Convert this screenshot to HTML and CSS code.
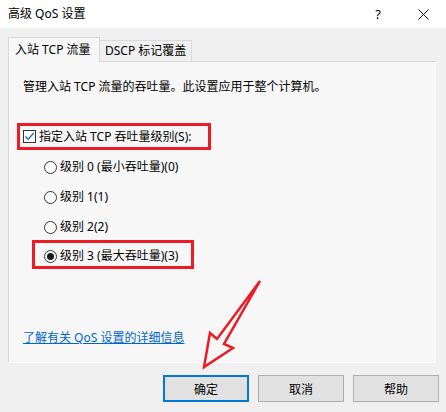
FILE: index.html
```html
<!DOCTYPE html>
<html lang="zh-CN">
<head>
  <meta charset="UTF-8">
  <title>高级 QoS 设置</title>
  <link rel="stylesheet" href="styles.css">
</head>
<body>
  <div class="titleBar">
    <div class="titleText">高级 QoS 设置</div>
    <div class="captionButton">?</div>
    <div class="captionButton">
      <svg width="11" height="11" viewBox="0 0 11 11"><path d="M0.5 0.5 L10.5 10.5 M10.5 0.5 L0.5 10.5" stroke="#111" stroke-width="1" fill="none"/></svg>
    </div>
  </div>

  <div class="dialog">
    <div class="tabs">
      <div class="tab active">入站 TCP 流量</div>
      <div class="tab">DSCP 标记覆盖</div>
    </div>

    <div class="panel">
      <p class="description">管理入站 TCP 流量的吞吐量。此设置应用于整个计算机。</p>

      <div class="highlight checkRow">
        <span class="checkBox">
          <svg width="11" height="11" viewBox="0 0 11 11"><path d="M1.5 5.5 L4.2 8.3 L9.6 2" stroke="#0a64c8" stroke-width="1.3" fill="none"/></svg>
        </span>
        <span>指定入站 TCP 吞吐量级别(S):</span>
      </div>

      <div class="radioGroup">
        <div class="radioRow"><span class="radio"></span>级别 0 (最小吞吐量)(0)</div>
        <div class="radioRow"><span class="radio"></span>级别 1(1)</div>
        <div class="radioRow"><span class="radio"></span>级别 2(2)</div>
        <div class="highlight radioRow selectedRow"><span class="radio checked"></span>级别 3 (最大吞吐量)(3)</div>
      </div>

      <a class="helpLink" href="#">了解有关 QoS 设置的详细信息</a>
    </div>

    <div class="buttonRow">
      <button class="dialogButton default">确定</button>
      <button class="dialogButton">取消</button>
      <button class="dialogButton">帮助</button>
    </div>
  </div>

  <!-- annotation arrow drawn over the screenshot -->
  <svg class="arrow" width="446" height="412" viewBox="0 0 446 412">
    <path d="M260 281 L217 339 L210 333 L204 367 L233 348 L224 344 Z" fill="none" stroke="#ec1c24" stroke-width="2.5" stroke-linejoin="miter"/>
  </svg>
</body>
</html>
```

FILE: styles.css
```css
* {
  margin: 0;
  padding: 0;
  box-sizing: border-box;
}

body {
  position: relative;
  width: 446px;
  height: 412px;
  overflow: hidden;
  background-color: #f0f0f0;
  font-family: "Noto Sans", "Noto Sans CJK SC", sans-serif;
  font-size: 12px;
  line-height: 16px;
  color: #000;
}

.titleBar {
  display: flex;
  align-items: center;
  height: 28px;
  background-color: #fff;
}

.titleText {
  flex: 1;
  padding-left: 8px;
}

.captionButton {
  width: 44px;
  display: flex;
  justify-content: center;
  align-items: center;
  font-size: 13px;
}

.captionButton:last-child {
  width: 46px;
  margin-top: 1px;
}

.dialog {
  padding: 9px 0 0 8px;
}

.tabs {
  display: flex;
  align-items: flex-end;
  height: 24px;
}

.tab {
  width: 92px;
  height: 21px;
  border: 1px solid #d9d9d9;
  border-left: none;
  border-bottom: none;
  background-color: #f0f0f0;
  padding-left: 5px;
  line-height: 19px;
  white-space: nowrap;
}

.tab.active {
  position: relative;
  z-index: 1;
  height: 25px;
  margin-bottom: -1px;
  border-left: 1px solid #d9d9d9;
  background-color: #f7f7f7;
  padding-left: 6px;
  line-height: 23px;
}

.panel {
  display: flex;
  flex-direction: column;
  align-items: flex-start;
  width: 428px;
  height: 302px;
  border: 1px solid #d9d9d9;
  border-right-color: #fbfbfb;
  border-bottom-color: #fbfbfb;
  background-color: #f7f7f7;
  padding: 17px 0 16px 14px;
}

.description {
  white-space: nowrap;
}

.highlight {
  border: 3px solid #ec1c24;
}

.checkRow {
  display: flex;
  align-items: center;
  gap: 3px;
  width: 194px;
  height: 27px;
  margin: 28px 0 0 -6px;
  padding-left: 3px;
  white-space: nowrap;
}

.checkBox {
  display: flex;
  justify-content: center;
  align-items: center;
  width: 13px;
  height: 13px;
  border: 1px solid #333;
  background-color: #fff;
}

.radioGroup {
  display: flex;
  flex-direction: column;
  align-items: flex-start;
  padding-left: 21px;
}

.radioRow {
  display: flex;
  align-items: center;
  gap: 3px;
  height: 20px;
  margin-top: 10px;
  white-space: nowrap;
}

.radioRow:first-child {
  margin-top: 7px;
}

.selectedRow {
  width: 162px;
  height: 29px;
  margin: 3px 0 0 -12px;
  padding: 3px 0 0 9px;
}

.radio {
  display: flex;
  justify-content: center;
  align-items: center;
  width: 13px;
  height: 13px;
  border: 1px solid #333;
  border-radius: 50%;
  background-color: #fff;
}

.radio.checked::after {
  content: '';
  width: 7px;
  height: 7px;
  border-radius: 50%;
  background-color: #1a1a1a;
}

.helpLink {
  margin-top: auto;
  color: #0066cc;
  text-decoration: underline;
  white-space: nowrap;
}

.buttonRow {
  display: flex;
  justify-content: flex-end;
  gap: 9px;
  margin-top: 12px;
  padding-right: 7px;
}

.dialogButton {
  width: 86px;
  height: 27px;
  border: 1px solid #adadad;
  background-color: #e1e1e1;
  font-family: inherit;
  font-size: 12px;
  color: #000;
}

.dialogButton.default {
  border: 2px solid #0078d7;
}

.arrow {
  position: absolute;
  top: 0;
  left: 0;
  pointer-events: none;
}
```
